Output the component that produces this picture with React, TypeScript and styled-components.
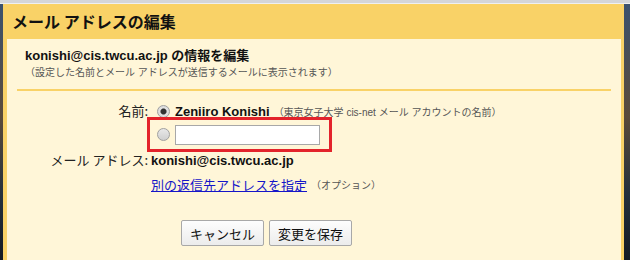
import styled, {createGlobalStyle} from 'styled-components'

const GlobalStyle = createGlobalStyle`
    html, body {
        margin: 0;
        padding: 0;
        background: #2d3b4c;
    }
    body {
        font-family: "Liberation Sans", Arial, "Noto Sans CJK JP", sans-serif;
        color: #222;
    }
`

export default () => {
    return (
        <>
            <GlobalStyle/>
            <Screen>
                <TopBar/>
                <Desktop>
                    <Dialog>
                        <Title>メール アドレスの編集</Title>
                        <Panel>
                            <Heading>konishi@cis.twcu.ac.jp の情報を編集</Heading>
                            <Note>（設定した名前とメール アドレスが送信するメールに表示されます）</Note>
                            <Divider/>
                            <Form>
                                <Label>名前:</Label>
                                <Value $indent>
                                    <Radio $checked/>
                                    <Strong>Zeniiro Konishi</Strong>
                                    <Hint>（東京女子大学 cis-net メール アカウントの名前）</Hint>
                                </Value>
                                <span/>
                                <Highlight>
                                    <Radio/>
                                    <NameInput defaultValue=""/>
                                </Highlight>
                                <Label>メール アドレス:</Label>
                                <Value>
                                    <Strong>konishi@cis.twcu.ac.jp</Strong>
                                </Value>
                                <span/>
                                <Value $gapTop>
                                    <Link href="#">別の返信先アドレスを指定</Link>
                                    <Hint>（オプション）</Hint>
                                </Value>
                            </Form>
                            <Buttons>
                                <Button>キャンセル</Button>
                                <Button>変更を保存</Button>
                            </Buttons>
                        </Panel>
                    </Dialog>
                </Desktop>
            </Screen>
        </>
    )
}

const Screen = styled.div`
    width: 630px;
    height: 260px;
    overflow: hidden;
    background: linear-gradient(180deg, #3a5270 0%, #5a4a3a 45%, #24303c 75%, #141a22 100%);
`

const TopBar = styled.div`
    height: 3px;
    background: #d4d6da;
    border-bottom: 1px solid #eef0f2;
`

const Desktop = styled.div`
    padding-left: 3px;
`

const Dialog = styled.div`
    width: 621px;
    height: 256px;
    background: #f9d267;
    padding: 0 3px 0 4px;
    box-sizing: border-box;
    display: flex;
    flex-direction: column;
`

const Title = styled.div`
    height: 36px;
    line-height: 36px;
    padding-left: 5px;
    font-family: "Noto Sans CJK JP", sans-serif;
    font-size: 16px;
    font-weight: 700;
    color: #111;
    margin-top: -1px;
`

const Panel = styled.div`
    flex: 1;
    background: #fff6d8;
    padding: 9px 10px 0 10px;
`

const Heading = styled.div`
    padding-left: 8px;
    font-size: 13px;
    line-height: 16px;
    font-weight: 700;
    color: #111;
`

const Note = styled.div`
    padding-left: 8px;
    margin-top: 1px;
    font-size: 10px;
    line-height: 16px;
    color: #555;
`

const Divider = styled.div`
    height: 2px;
    background: #f9d267;
    margin-top: 8px;
`

const Form = styled.div`
    display: grid;
    grid-template-columns: 131px 1fr;
    column-gap: 3px;
    align-items: center;
    margin-top: 11px;
`

const Label = styled.div`
    text-align: right;
    font-family: "Noto Sans CJK JP", sans-serif;
    font-size: 13px;
    line-height: 18px;
    color: #222;
`

const Value = styled.div<{ $indent?: boolean, $gapTop?: boolean }>`
    display: flex;
    align-items: center;
    height: 18px;
    padding-left: ${p => p.$indent ? '6px' : '0'};
    margin-top: ${p => p.$gapTop ? '6px' : '0'};
`

const Highlight = styled.div`
    display: flex;
    align-items: center;
    width: 185px;
    height: 35px;
    box-sizing: border-box;
    margin: -3px 0 -1px -4px;
    padding-left: 7px;
    border: 3px solid #e3232b;
`

const Radio = styled.span<{ $checked?: boolean }>`
    width: 11px;
    height: 11px;
    border-radius: 50%;
    border: 1px solid #a0a0a0;
    background: ${p => p.$checked
        ? 'radial-gradient(circle, #333 0 2.5px, #888 3px, #e2e2e2 3.6px, #d4d4d4 100%)'
        : 'linear-gradient(180deg, #e8e8e8, #cfcfcf)'};
    flex-shrink: 0;
    margin-right: 5px;
`

const NameInput = styled.input`
    width: 145px;
    height: 20px;
    box-sizing: border-box;
    border: 1px solid #a8a8a8;
    background: #fff;
    padding: 0 3px;
    outline: none;
`

const Strong = styled.span`
    font-size: 13px;
    font-weight: 700;
    color: #111;
`

const Hint = styled.span`
    font-size: 10px;
    color: #555;
    margin-left: 4px;
`

const Link = styled.a`
    font-family: "Noto Sans CJK JP", sans-serif;
    font-size: 13px;
    color: #1515c8;
    text-decoration: underline;
`

const Buttons = styled.div`
    display: flex;
    gap: 5px;
    margin-top: 27px;
    padding-left: 164px;
`

const Button = styled.button`
    height: 26px;
    width: 83px;
    padding: 0;
    font-family: "Noto Sans CJK JP", sans-serif;
    font-size: 13px;
    color: #111;
    border: 1px solid #a8a8a8;
    border-radius: 2px;
    background: linear-gradient(180deg, #fdfdfd, #ececec);
`
